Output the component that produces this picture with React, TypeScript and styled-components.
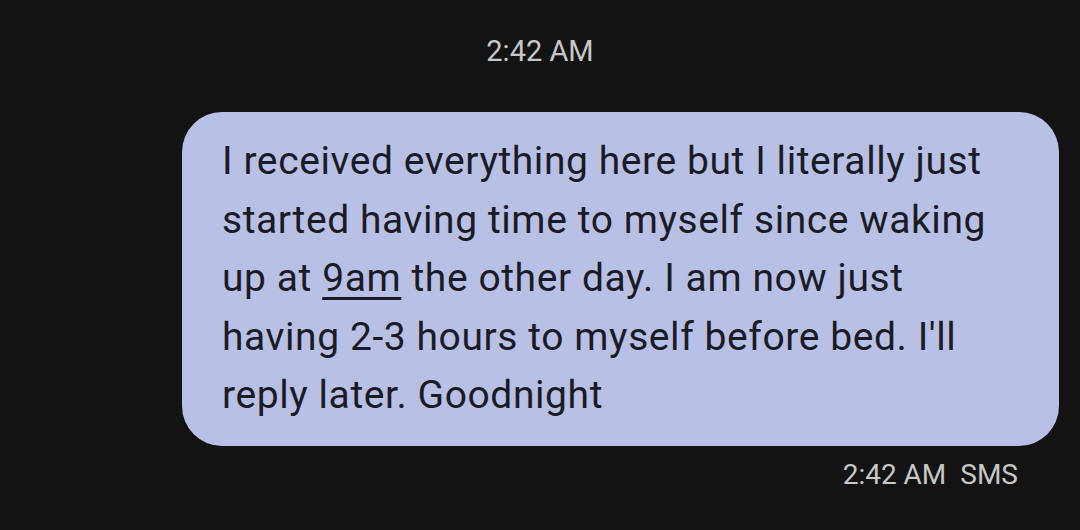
import React from "react";
import styled, { createGlobalStyle } from "styled-components";

const Global = createGlobalStyle`
  html, body { margin: 0; padding: 0; background: #131313; }
  body { width: 1080px; height: 530px; overflow: hidden; font-family: Roboto, "Noto Sans", sans-serif; }
`;

const Screen = styled.div`
  width: 1080px;
  height: 530px;
  box-sizing: border-box;
  background: #131313;
  display: flex;
  flex-direction: column;
  padding: 32px 21px 0 182px;
`;

const DateStamp = styled.div`
  align-self: center;
  margin-left: -161px;
  color: #c7c7c7;
  font-size: 29px;
  line-height: 38px;
  height: 38px;
`;

const Bubble = styled.div`
  margin-top: 42px;
  background: #b9c0e5;
  border-radius: 40px;
  padding: 20px 50px 21px 40px;
  color: #1a1b24;
  font-size: 39px;
  line-height: 58.5px;
  letter-spacing: 0.58px;
`;

const Link = styled.span`
  text-decoration: underline;
  text-decoration-thickness: 3px;
  text-underline-offset: 6px;
`;

const Meta = styled.div`
  align-self: flex-end;
  margin-top: 12px;
  margin-right: 41px;
  display: flex;
  gap: 14px;
  color: #c7c7c7;
  font-size: 28px;
  line-height: 34px;
`;

export default function App() {
  return (
    <>
      <Global />
      <Screen>
        <DateStamp>2:42 AM</DateStamp>
        <Bubble>
          I received everything here but I literally just started having time to myself since waking
          up at <Link>9am</Link> the other day. I am now just having 2-3 hours to myself before bed. I'll
          reply later. Goodnight
        </Bubble>
        <Meta>
          <span>2:42 AM</span>
          <span>SMS</span>
        </Meta>
      </Screen>
    </>
  );
}
